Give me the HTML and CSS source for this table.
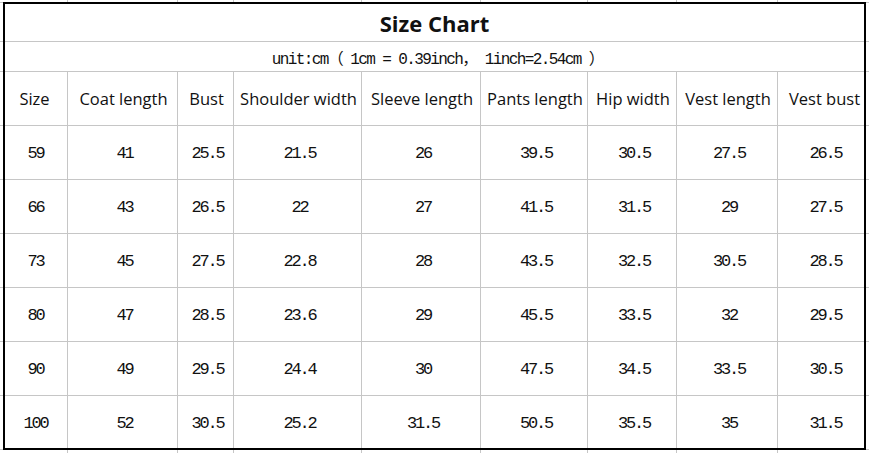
FILE: index.html
```html
<!DOCTYPE html>
<html>
<head>
<meta charset="utf-8">
<link rel="stylesheet" href="styles.css">
</head>
<body>
<div class="sheet">
  <div class="sp"></div><div class="sp"></div><div class="sp"></div><div class="sp"></div><div class="sp"></div><div class="sp"></div><div class="sp"></div><div class="sp"></div><div class="sp"></div>
  <div class="title">Size Chart</div>
  <div class="unit">unit:cm（ 1cm = 0.39inch， 1inch=2.54cm ）</div>
  <div class="hd">Size</div><div class="hd">Coat length</div><div class="hd">Bust</div><div class="hd">Shoulder width</div><div class="hd">Sleeve length</div><div class="hd">Pants length</div><div class="hd">Hip width</div><div class="hd">Vest length</div><div class="hd">Vest bust</div>
  <div class="num">59</div><div class="num">41</div><div class="num">25.5</div><div class="num">21.5</div><div class="num">26</div><div class="num">39.5</div><div class="num">30.5</div><div class="num">27.5</div><div class="num">26.5</div>
  <div class="num">66</div><div class="num">43</div><div class="num">26.5</div><div class="num">22</div><div class="num">27</div><div class="num">41.5</div><div class="num">31.5</div><div class="num">29</div><div class="num">27.5</div>
  <div class="num">73</div><div class="num">45</div><div class="num">27.5</div><div class="num">22.8</div><div class="num">28</div><div class="num">43.5</div><div class="num">32.5</div><div class="num">30.5</div><div class="num">28.5</div>
  <div class="num">80</div><div class="num">47</div><div class="num">28.5</div><div class="num">23.6</div><div class="num">29</div><div class="num">45.5</div><div class="num">33.5</div><div class="num">32</div><div class="num">29.5</div>
  <div class="num">90</div><div class="num">49</div><div class="num">29.5</div><div class="num">24.4</div><div class="num">30</div><div class="num">47.5</div><div class="num">34.5</div><div class="num">33.5</div><div class="num">30.5</div>
  <div class="num">100</div><div class="num">52</div><div class="num">30.5</div><div class="num">25.2</div><div class="num">31.5</div><div class="num">50.5</div><div class="num">35.5</div><div class="num">35</div><div class="num">31.5</div>
  <div class="sp"></div><div class="sp"></div><div class="sp"></div><div class="sp"></div><div class="sp"></div><div class="sp"></div><div class="sp"></div><div class="sp"></div><div class="sp"></div>
  <div class="frame"></div>
</div>
</body>
</html>
```
FILE: styles.css
```css
html, body {
  margin: 0;
  padding: 0;
  background: #fff;
}
.sheet {
  position: relative;
  width: 869px;
  height: 453px;
  display: grid;
  grid-template-columns: 67px 109px 55px 127px 118px 106px 88px 100px 91px;
  grid-template-rows: 2px 38px 29px 53px repeat(6, 53px) 3px;
  gap: 1px;
  background: #c6c6c6;
  overflow: hidden;
}
.sheet > div {
  background: #fff;
  display: flex;
  align-items: center;
  justify-content: center;
  color: #111;
  white-space: nowrap;
}
.title {
  grid-column: 1 / -1;
  font-family: "Open Sans", sans-serif;
  font-weight: 700;
  font-size: 22px;
  padding-top: 1px;
}
.unit {
  grid-column: 1 / -1;
  font-family: "Liberation Mono", "Noto Sans CJK SC", monospace;
  font-size: 16px;
  letter-spacing: -1.6px;
  padding-left: 6px;
}
.hd {
  font-family: "Open Sans", sans-serif;
  font-size: 16.5px;
  padding-left: 2px;
}
.num {
  font-family: "Liberation Mono", monospace;
  font-size: 17px;
  letter-spacing: -2.2px;
  padding-left: 4px;
  padding-top: 2px;
}
.sheet > .frame {
  position: absolute;
  left: 3px;
  top: 2px;
  width: 863px;
  height: 448px;
  box-sizing: border-box;
  border: 2px solid #000;
  background: transparent;
  pointer-events: none;
}
```
